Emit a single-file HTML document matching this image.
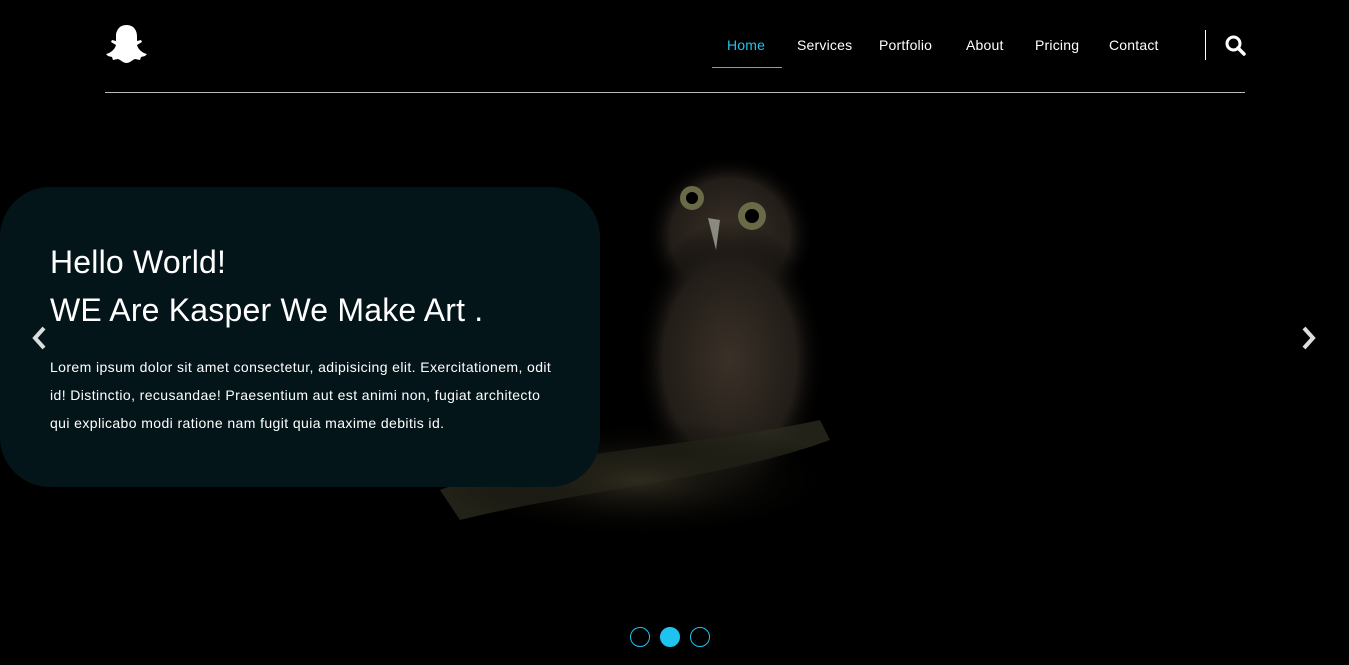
<!DOCTYPE html>
<html><head><style>
*{margin:0;padding:0;box-sizing:border-box}
body{width:1349px;height:665px;background:#000;overflow:hidden;font-family:"Liberation Sans",sans-serif;position:relative;color:#fff}
.line{position:absolute;left:105px;top:92px;width:1140px;height:1px;background:#bbb}
.n{position:absolute;top:36px;font-size:14px;color:#fff;line-height:18px;letter-spacing:0.2px}
.ul{position:absolute;left:712px;top:67px;width:70px;height:1px;background:#1ec3ef}
.sep{position:absolute;left:1205px;top:30px;width:1px;height:30px;background:#fff}
.box{position:absolute;left:0;top:187px;width:600px;height:300px;background:#04151a;border-radius:50px;padding:51px 50px}
.box h1{font-weight:normal;font-size:32px;line-height:48px;letter-spacing:0.2px}
.box p{font-size:14px;line-height:28px;margin-top:19px;white-space:nowrap;letter-spacing:0.4px}
.dot{position:absolute;top:627px;width:20px;height:20px;border-radius:50%;border:1px solid #1ec3ef}
</style></head><body>
<svg style="position:absolute;left:420px;top:150px" width="520" height="515" viewBox="0 0 520 515">
<defs><radialGradient id="g" cx="50%" cy="50%" r="50%"><stop offset="0" stop-color="#3a3128"/><stop offset="0.7" stop-color="#221d18"/><stop offset="1" stop-color="#000" stop-opacity="0"/></radialGradient>
<radialGradient id="b" cx="50%" cy="50%" r="50%"><stop offset="0" stop-color="#2e2b1e"/><stop offset="1" stop-color="#000" stop-opacity="0"/></radialGradient></defs>
<ellipse cx="310" cy="85" rx="85" ry="80" fill="url(#g)"/>
<ellipse cx="310" cy="210" rx="95" ry="140" fill="url(#g)"/>
<path d="M20 340 C120 300 260 300 400 270 L410 290 C300 330 160 340 40 370Z" fill="#2a2a1e" opacity="0.8"/>
<ellipse cx="220" cy="330" rx="200" ry="60" fill="url(#b)"/>
<circle cx="272" cy="48" r="12" fill="#6a6a48"/><circle cx="272" cy="48" r="6" fill="#000"/>
<circle cx="332" cy="66" r="14" fill="#6a6a48"/><circle cx="332" cy="66" r="7" fill="#000"/>
<path d="M288 68 L296 100 L300 70Z" fill="#8a8a80"/>
</svg>
<svg style="position:absolute;left:106px;top:24px" width="41" height="39" viewBox="0 0 41 39"><path d="M20.5 1C13 1 10 7 10 12v5l-4-1 -1 2 5 3c-1 4-5 8-10 9l2 2 4 1 1 3 5-1c3 1 5 4 8.5 4s5.5-3 8.5-4l5 1 1-3 4-1 2-2c-5-1-9-5-10-9l5-3-1-2-4 1v-5C31 7 28 1 20.5 1z" fill="#fff"/></svg>
<span class="n" style="left:727px;color:#1ec3ef">Home</span>
<span class="n" style="left:797px">Services</span>
<span class="n" style="left:879px">Portfolio</span>
<span class="n" style="left:966px">About</span>
<span class="n" style="left:1035px">Pricing</span>
<span class="n" style="left:1109px">Contact</span>
<div class="ul"></div>
<div class="sep"></div>
<svg style="position:absolute;left:1225px;top:35px" width="22" height="22" viewBox="0 0 22 22"><circle cx="8.5" cy="8.5" r="6.5" fill="none" stroke="#fff" stroke-width="3"/><path d="M13 13l6 6" stroke="#fff" stroke-width="3.5" stroke-linecap="round"/></svg>
<div class="line"></div>
<div class="box"><h1>Hello World!<br>WE Are Kasper We Make Art .</h1>
<p>Lorem ipsum dolor sit amet consectetur, adipisicing elit. Exercitationem, odit<br>id! Distinctio, recusandae! Praesentium aut est animi non, fugiat architecto<br>qui explicabo modi ratione nam fugit quia maxime debitis id.</p></div>
<svg style="position:absolute;left:30px;top:325px" width="18" height="26"><path d="M14 3L5 13l9 10" fill="none" stroke="#ddd" stroke-width="4"/></svg>
<svg style="position:absolute;left:1300px;top:325px" width="18" height="26"><path d="M4 3l9 10-9 10" fill="none" stroke="#ddd" stroke-width="4"/></svg>
<div class="dot" style="left:630px"></div>
<div class="dot" style="left:660px;background:#1ec3ef"></div>
<div class="dot" style="left:690px"></div>
</body></html>
